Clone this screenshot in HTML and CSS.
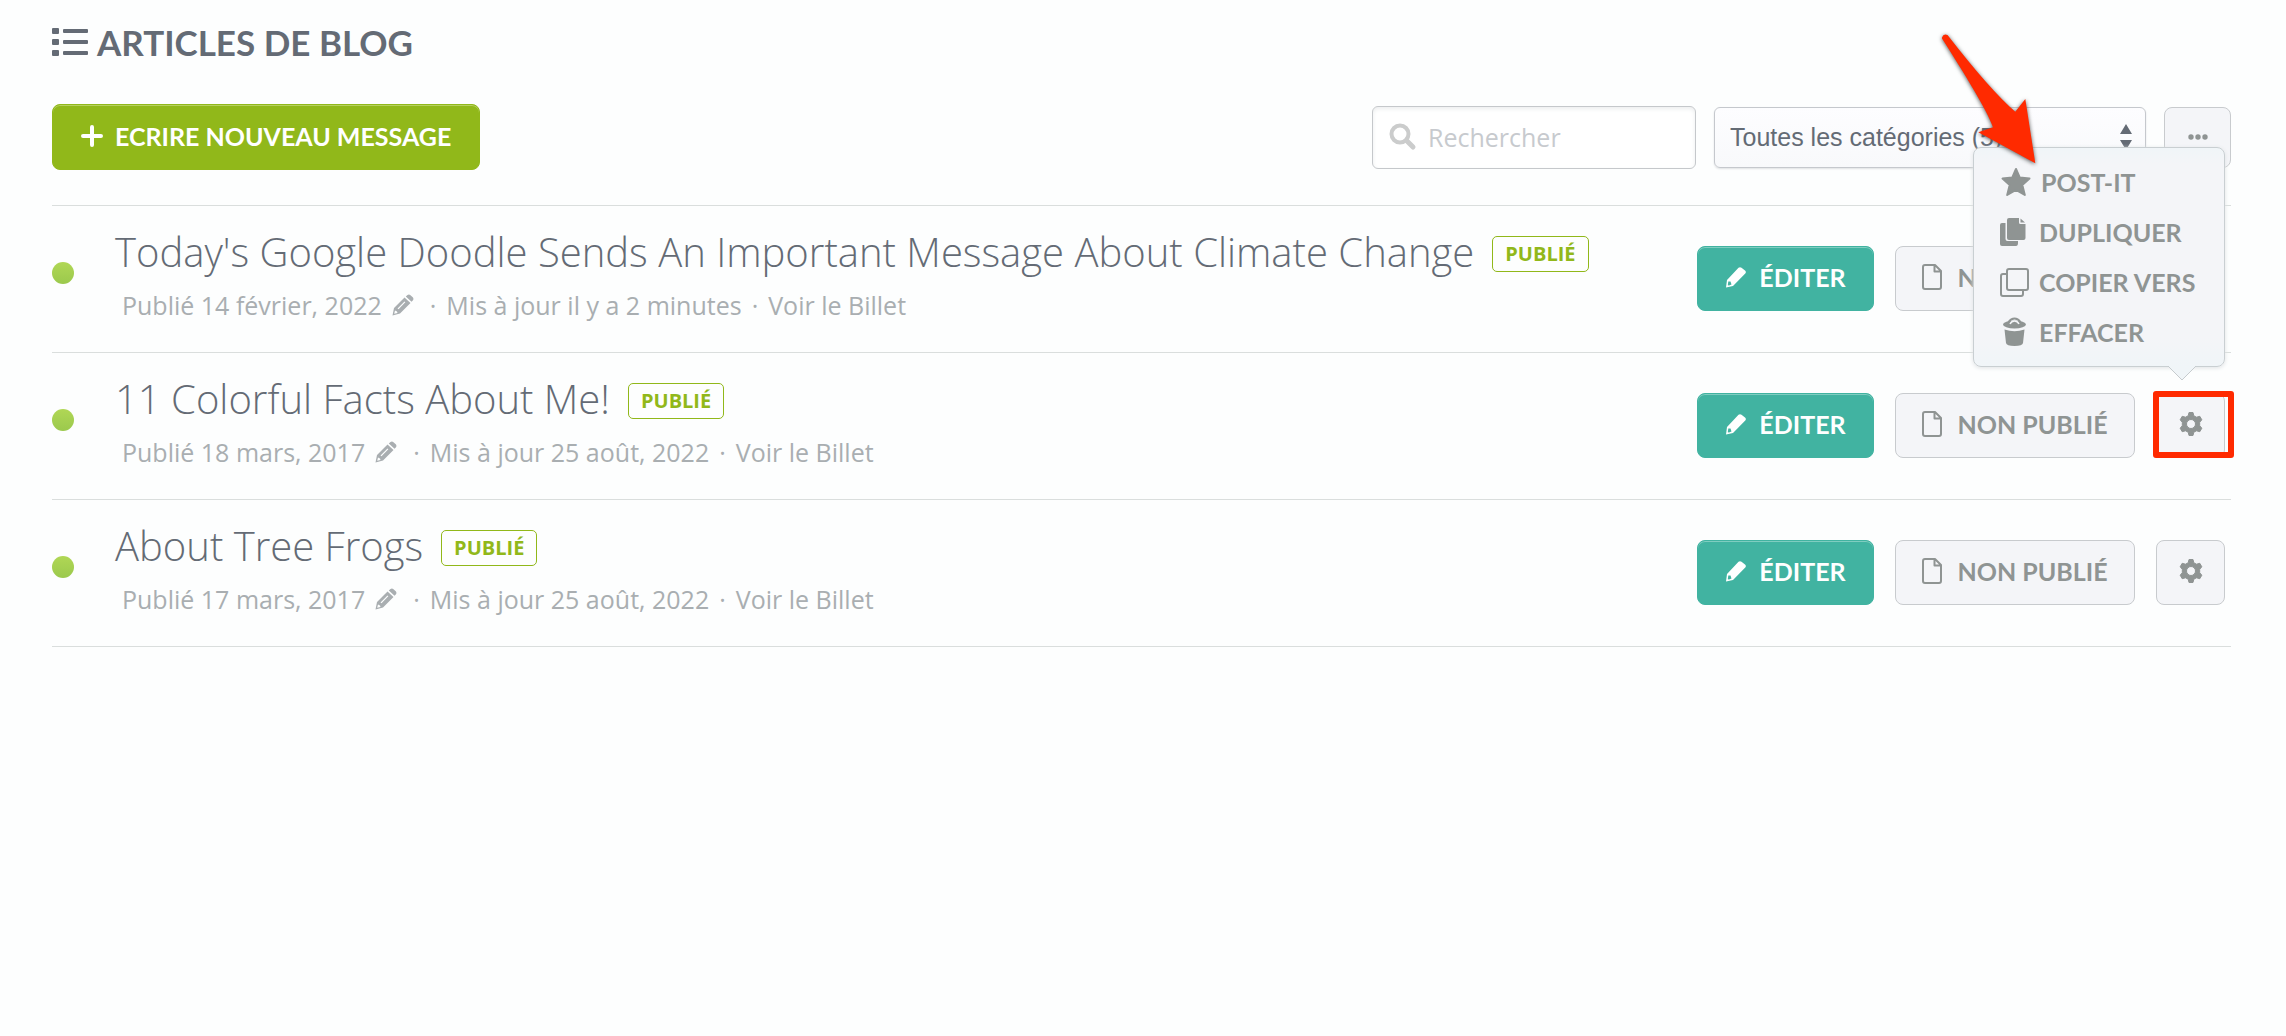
FILE: index.html
```html
<!DOCTYPE html>
<html lang="fr">
<head>
<meta charset="utf-8">
<meta name="viewport" content="width=device-width, initial-scale=1">
<title>Articles de blog</title>
<link rel="stylesheet" href="styles.css">
</head>
<body>
<svg class="symbols" aria-hidden="true">
  <symbol id="i-pencil" viewBox="0 0 22 22"><path fill="currentColor" fill-rule="evenodd" d="M1 21.500 2 14 13.500 1.800Q15 0.500 16.500 1.800L20.300 4.800Q21.500 6 20.500 7.300L8 20ZM3.300 15.500 2.800 19.300 4 19.500 6.500 18.500 5.500 15.500Z"/></symbol>
  <symbol id="i-pencil-soft" viewBox="0 0 22 22"><path fill="currentColor" fill-rule="evenodd" d="M0.500 21.500 2 14 12.500 3.500 18.500 9 8 19.500ZM13.800 2.500 15.500 1Q17 0 18.500 1.200L21 3.500Q22 5 21 6.300L19.500 7.800ZM3 16.500 2.200 19.800 5.500 19 5 17.500ZM5.500 14.500 12.500 7.500 13.300 8.200 6.500 15.200Z"/></symbol>
  <symbol id="i-page" viewBox="0 0 20 26"><path fill="none" stroke="currentColor" stroke-width="2" stroke-linejoin="round" d="M3 1H13L19 7V23Q19 25 17 25H3Q1 25 1 23V3Q1 1 3 1ZM12.500 1.500V7.500H18.500"/></symbol>
  <symbol id="i-gear" viewBox="0 0 24 24"><path fill="currentColor" fill-rule="evenodd" stroke="currentColor" stroke-linejoin="round" d="M10 0.500H14L14.800 3.800 17.500 5.200 20.800 4.300 22.800 7.800 20.700 10.300V13.700L22.800 16.200 20.800 19.700 17.500 18.800 14.800 20.200 14 23.500H10L9.200 20.200 6.500 18.800 3.200 19.700 1.200 16.200 3.300 13.700V10.300L1.200 7.800 3.200 4.300 6.500 5.200 9.200 3.800ZM12 7.500A4.500 4.500 0 1 0 12 16.500 4.500 4.500 0 1 0 12 7.500Z"/></symbol>
</svg>

<main class="page">
  <h1 class="heading">
    <svg class="heading-icon" viewBox="0 0 36 30" aria-hidden="true"><g fill="currentColor"><rect y="1" width="7" height="6" rx="1"/><rect y="12" width="7" height="6" rx="1"/><rect y="23" width="7" height="6" rx="1"/><rect x="11" y="2" width="25" height="4" rx="1"/><rect x="11" y="13" width="25" height="4" rx="1"/><rect x="11" y="24" width="25" height="4" rx="1"/></g></svg>
    ARTICLES DE BLOG
  </h1>

  <div class="toolbar">
    <button class="btn btn-new" type="button">
      <svg class="icon-plus" viewBox="0 0 22 22" aria-hidden="true"><path d="M11 2V20M2 11H20" stroke="currentColor" stroke-width="4" stroke-linecap="round"/></svg>
      ECRIRE NOUVEAU MESSAGE
    </button>
    <div class="filters">
      <label class="search">
        <svg class="search-icon" viewBox="0 0 28 28" aria-hidden="true"><g fill="none" stroke="currentColor"><circle cx="11" cy="11" r="8.500" stroke-width="4"/><path d="M17.500 17.500 24 24" stroke-width="5" stroke-linecap="round"/></g></svg>
        <input class="search-input" type="text" placeholder="Rechercher" aria-label="Rechercher">
      </label>
      <div class="select">
        <select class="select-input" aria-label="Catégories"><option>Toutes les catégories (5)</option></select>
        <svg class="select-icon" viewBox="0 0 12 26" aria-hidden="true"><path fill="currentColor" d="M0 10 6 0 12 10ZM0 16H12L6 26Z"/></svg>
      </div>
      <button class="btn btn-plain btn-more" type="button" aria-label="Plus">
        <svg class="icon-dots" viewBox="0 0 20 6" aria-hidden="true"><g fill="currentColor"><circle cx="3" cy="3" r="2.700"/><circle cx="10" cy="3" r="2.700"/><circle cx="17" cy="3" r="2.700"/></g></svg>
      </button>
    </div>
  </div>

  <ul class="posts">
    <li class="post">
      <span class="status"></span>
      <div class="post-body">
        <div class="post-line"><h2 class="post-title">Today's Google Doodle Sends An Important Message About Climate Change</h2><span class="badge">PUBLIÉ</span></div>
        <p class="meta"><span>Publié 14 février, 2022</span><svg class="meta-icon" aria-hidden="true"><use href="#i-pencil-soft"/></svg><span>·</span><span>Mis à jour il y a 2 minutes</span><span>·</span><a class="meta-link" href="#">Voir le Billet</a></p>
      </div>
      <div class="actions">
        <button class="btn btn-edit" type="button"><svg class="icon-edit" aria-hidden="true"><use href="#i-pencil"/></svg>ÉDITER</button>
        <button class="btn btn-plain btn-unpublish" type="button"><svg class="icon-page" aria-hidden="true"><use href="#i-page"/></svg>NON PUBLIÉ</button>
        <button class="btn btn-plain btn-gear" type="button" aria-label="Options"><svg class="icon-gear" aria-hidden="true"><use href="#i-gear"/></svg></button>
      </div>
    </li>
    <li class="post">
      <span class="status"></span>
      <div class="post-body">
        <div class="post-line"><h2 class="post-title">11 Colorful Facts About Me!</h2><span class="badge">PUBLIÉ</span></div>
        <p class="meta"><span>Publié 18 mars, 2017</span><svg class="meta-icon" aria-hidden="true"><use href="#i-pencil-soft"/></svg><span>·</span><span>Mis à jour 25 août, 2022</span><span>·</span><a class="meta-link" href="#">Voir le Billet</a></p>
      </div>
      <div class="actions">
        <button class="btn btn-edit" type="button"><svg class="icon-edit" aria-hidden="true"><use href="#i-pencil"/></svg>ÉDITER</button>
        <button class="btn btn-plain btn-unpublish" type="button"><svg class="icon-page" aria-hidden="true"><use href="#i-page"/></svg>NON PUBLIÉ</button>
        <div class="options">
          <button class="btn btn-plain btn-gear" type="button" aria-label="Options" aria-expanded="true"><svg class="icon-gear" aria-hidden="true"><use href="#i-gear"/></svg></button>
          <span class="highlight"></span>
          <div class="menu">
            <button class="menu-item menu-star" type="button"><svg class="menu-icon" viewBox="0 0 30 30" aria-hidden="true"><path fill="currentColor" stroke="currentColor" stroke-linejoin="round" stroke-width="2" d="M15 2 18.800 10.600 28.500 11.600 21.300 18 23.800 28 15 23 6.200 28 8.700 18 1.500 11.600 11.200 10.600Z"/></svg>POST-IT</button>
            <button class="menu-item" type="button"><svg class="menu-icon" viewBox="0 0 30 30" aria-hidden="true"><g fill="currentColor"><path d="M3 6H6.500V22Q6.500 24 8.500 24H19V26Q19 29 17 29H3Q1 29 1 27V8Q1 6 3 6Z"/><path d="M10 1H20V5.500Q20 7 21.500 7H26.500V21Q26.500 23 24.500 23H10Q8 23 8 21V3Q8 1 10 1Z"/><path d="M21.500 1.500 26 5.500H21.500Z"/></g></svg>DUPLIQUER</button>
            <button class="menu-item" type="button"><svg class="menu-icon" viewBox="0 0 30 30" aria-hidden="true"><g fill="none" stroke="currentColor" stroke-width="2"><rect x="8" y="2" width="21" height="21" rx="2"/><path d="M8 7H4Q2 7 2 9V27Q2 29 4 29H22Q24 29 24 27V23"/></g></svg>COPIER VERS</button>
            <button class="menu-item" type="button"><svg class="menu-icon" viewBox="0 0 30 30" aria-hidden="true"><path fill="currentColor" d="M5.500 12.500Q15.500 16 25.500 12.500L24 26Q23.500 29 15.500 29T7 26Z"/><ellipse cx="15.500" cy="7.500" rx="11.500" ry="4" fill="currentColor"/><path d="M9.500 5Q12 1.500 15.500 1.500T21.500 5" fill="none" stroke="currentColor" stroke-width="2"/><path d="M11 7Q12.500 4 15.500 4T20 7" fill="none" stroke="#f4f5f8" stroke-width="1.500"/></svg>EFFACER</button>
            <svg class="menu-caret" viewBox="0 0 28 15" aria-hidden="true"><path d="M0 0 14 14 28 0" fill="#f0f5f8" stroke="#c6cbce"/></svg>
            <svg class="pointer" viewBox="0 0 108 140" aria-hidden="true"><path fill="#ff2a00" d="M5 6.500Q6.500 2 10.500 4 54 60 78.300 80.700L88.300 68 98.300 132.300 41.300 101.300 56 96.300C52 84 36 56 5 7.500Z"/></svg>
          </div>
        </div>
      </div>
    </li>
    <li class="post">
      <span class="status"></span>
      <div class="post-body">
        <div class="post-line"><h2 class="post-title">About Tree Frogs</h2><span class="badge">PUBLIÉ</span></div>
        <p class="meta"><span>Publié 17 mars, 2017</span><svg class="meta-icon" aria-hidden="true"><use href="#i-pencil-soft"/></svg><span>·</span><span>Mis à jour 25 août, 2022</span><span>·</span><a class="meta-link" href="#">Voir le Billet</a></p>
      </div>
      <div class="actions">
        <button class="btn btn-edit" type="button"><svg class="icon-edit" aria-hidden="true"><use href="#i-pencil"/></svg>ÉDITER</button>
        <button class="btn btn-plain btn-unpublish" type="button"><svg class="icon-page" aria-hidden="true"><use href="#i-page"/></svg>NON PUBLIÉ</button>
        <button class="btn btn-plain btn-gear" type="button" aria-label="Options"><svg class="icon-gear" aria-hidden="true"><use href="#i-gear"/></svg></button>
      </div>
    </li>
  </ul>
</main>
</body>
</html>
```
FILE: styles.css
```css
* { box-sizing: border-box; }

body {
  margin: 0;
  background: #fdfefe;
  color: #646b75;
  font-family: "Open Sans", sans-serif;
}

.symbols { position: absolute; width: 0; height: 0; }

.page { padding: 20px 55px 0 52px; }

.heading {
  display: flex;
  align-items: center;
  gap: 9px;
  margin: 0 0 40px;
  font: 700 35px/44px Lato, sans-serif;
}
.heading-icon { width: 36px; height: 30px; }

.toolbar {
  display: flex;
  align-items: center;
  justify-content: space-between;
  padding-bottom: 35px;
  border-bottom: 1px solid #dadedd;
}
.filters { display: flex; align-items: center; gap: 18px; }

.btn {
  display: flex;
  align-items: center;
  justify-content: center;
  height: 65px;
  padding: 0 0 3px;
  border: 1px solid transparent;
  border-radius: 8px;
  font: 700 25px/32px Lato, sans-serif;
  color: #fff;
  white-space: nowrap;
}
.btn-new {
  gap: 12px;
  height: 66px;
  padding: 0 28px 2px;
  background: #91b81a;
  border-color: #91b81a;
  box-shadow: inset 0 1px 0 #b6d05f;
}
.btn-plain {
  background: #f4f5f8;
  border-color: #c8cbce;
  color: #8f9493;
}
.btn-edit {
  gap: 12px;
  width: 177px;
  background: #41b3a1;
  border-color: #41b3a1;
  box-shadow: inset 0 1px 0 #7fcdc0;
}
.btn-unpublish { gap: 15px; width: 240px; }
.btn-gear { width: 69px; }
.btn-more { width: 67px; height: 61px; padding: 0; }

.icon-plus { width: 22px; height: 22px; }
.icon-edit { width: 22px; height: 22px; }
.icon-page { width: 20px; height: 26px; }
.icon-gear { width: 24px; height: 24px; }
.icon-dots { width: 20px; height: 6px; }

.search {
  display: flex;
  align-items: center;
  gap: 11px;
  width: 324px;
  height: 63px;
  padding: 0 16px;
  border: 1px solid #c5c8cb;
  border-radius: 6px;
  background: #fff;
  box-shadow: inset 0 2px 4px #eceeef;
}
.search-icon { flex: none; width: 28px; height: 28px; color: #cbcccc; }
.search-input {
  flex: 1;
  min-width: 0;
  padding: 0;
  border: 0;
  outline: 0;
  background: none;
  font: 400 25px/36px "Open Sans", sans-serif;
  color: #646b75;
}
.search-input::placeholder { color: #c7cace; opacity: 1; }

.select { position: relative; width: 432px; }
.select-input {
  display: block;
  width: 100%;
  height: 61px;
  padding: 0 40px 0 15px;
  border: 1px solid #c5c8cd;
  border-radius: 6px;
  background: linear-gradient(#fdfdff, #f8f9fb);
  box-shadow: 0 1px 2px #dfe1e3;
  appearance: none;
  font: 400 25px/32px "Liberation Sans", sans-serif;
  color: #646b75;
}
.select-icon { position: absolute; right: 14px; top: 17px; width: 12px; height: 26px; }

.posts { margin: 0; padding: 0; list-style: none; }
.post {
  display: flex;
  align-items: flex-start;
  padding: 19px 6px 29px 0;
  border-bottom: 1px solid #dadedd;
}
.status {
  flex: none;
  width: 22px;
  height: 22px;
  margin: 37px 41px 0 0;
  border-radius: 50%;
  background: linear-gradient(#b0d755, #9bc94d);
}
.post-body { flex: 1; min-width: 0; }
.post-line { display: flex; align-items: center; gap: 18px; }
.post-title { margin: 0; font-size: 40px; line-height: 54px; font-weight: 300; }
.badge {
  height: 36px;
  margin-top: 4px;
  padding: 0 12px;
  border: 1px solid #91b81a;
  border-radius: 5px;
  font-size: 20px;
  line-height: 34px;
  font-weight: 700;
  color: #91b81a;
}
.meta {
  display: flex;
  align-items: center;
  gap: 10px;
  margin: 8px 0 0 7px;
  font-size: 25px;
  line-height: 36px;
  color: #a9aeb1;
}
.meta-icon { width: 22px; height: 22px; margin-right: 6px; }
.meta-link { color: inherit; text-decoration: none; }

.actions {
  display: flex;
  align-items: center;
  gap: 21px;
  margin-top: 21px;
}

.options { position: relative; }
.highlight {
  position: absolute;
  inset: -2px -9px 0 -3px;
  border: 6px solid #ff2a00;
  border-radius: 3px;
}
.menu {
  position: absolute;
  right: 0;
  bottom: 91px;
  z-index: 2;
  width: 252px;
  padding: 9px 0 9px 25px;
  border: 1px solid #c9cfd2;
  border-radius: 8px;
  background: linear-gradient(#f0f5f8, #f4f5f8 16px, #f4f5f8 calc(100% - 28px), #f0f5f8);
  box-shadow: 0 1px 4px #dfe2e4;
}
.menu-item {
  display: flex;
  align-items: center;
  gap: 10px;
  width: 100%;
  height: 50px;
  padding: 0;
  border: 0;
  background: none;
  font: 700 25px/32px Lato, sans-serif;
  color: #8f9493;
  white-space: nowrap;
}
.menu-star { padding-left: 2px; }
.menu-icon { flex: none; width: 30px; height: 30px; }
.menu-caret {
  position: absolute;
  right: 28px;
  top: 100%;
  width: 28px;
  height: 15px;
}
.pointer {
  position: absolute;
  left: -37px;
  top: -117px;
  width: 108px;
  height: 140px;
  filter: drop-shadow(0 1px 2px #555);
}
```
